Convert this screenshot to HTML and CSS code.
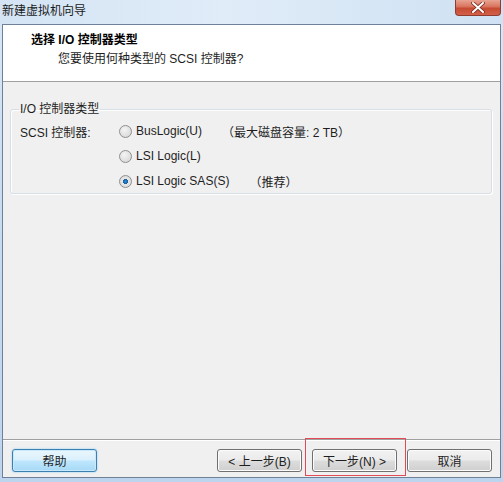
FILE: index.html
```html
<!DOCTYPE html>
<html lang="zh-CN">
<head>
    <meta charset="UTF-8">
    <title>新建虚拟机向导</title>
    <link rel="stylesheet" href="styles.css">
</head>
<body>
    <div class="window">
        <div class="titlebar">
            <span class="title">新建虚拟机向导</span>
            <button class="close" type="button">
                <svg width="14" height="11" viewBox="0 0 14 11">
                    <path d="M2 1 L12 10 M12 1 L2 10" stroke="#7a2a1e" stroke-width="3.6" stroke-linecap="round"/>
                    <path d="M2 1 L12 10 M12 1 L2 10" stroke="#fff" stroke-width="2" stroke-linecap="round"/>
                </svg>
            </button>
        </div>
        <div class="client">
            <div class="header">
                <div class="header-title">选择 I/O 控制器类型</div>
                <div class="header-sub">您要使用何种类型的 SCSI 控制器?</div>
            </div>
            <div class="content">
                <fieldset class="group">
                    <legend>I/O 控制器类型</legend>
                    <div class="row">
                        <span class="row-label">SCSI 控制器:</span>
                        <label class="option"><input type="radio" name="scsi"> BusLogic(U)</label>
                        <span class="note">（最大磁盘容量: 2 TB）</span>
                    </div>
                    <div class="row">
                        <span class="row-label"></span>
                        <label class="option"><input type="radio" name="scsi"> LSI Logic(L)</label>
                    </div>
                    <div class="row">
                        <span class="row-label"></span>
                        <label class="option"><input type="radio" name="scsi" checked> LSI Logic SAS(S)</label>
                        <span class="note">（推荐）</span>
                    </div>
                </fieldset>
            </div>
            <div class="footer">
                <button class="btn btn-help" type="button">帮助</button>
                <div class="nav">
                    <button class="btn" type="button">&lt; 上一步(B)</button>
                    <button class="btn" type="button">下一步(N) &gt;</button>
                    <button class="btn" type="button">取消</button>
                </div>
                <div class="mark"></div>
            </div>
        </div>
    </div>
</body>
</html>
```

FILE: styles.css
```css
body {
    margin: 0;
    font-family: "Liberation Sans", "Noto Sans CJK SC", sans-serif;
    font-size: 12px;
    color: #1e1e1e;
}
.window {
    width: 503px;
    height: 482px;
    background: linear-gradient(to bottom, #d9e8f7 0%, #c8ddf2 40%, #bcd4ee 100%);
    overflow: hidden;
}
.titlebar {
    height: 24px;
    display: flex;
    justify-content: space-between;
    align-items: flex-start;
    background: linear-gradient(to right, #d4e4f4 0%, #e0ecf8 45%, #cfe1f3 100%);
}
.title {
    padding: 3px 0 0 2px;
    line-height: 16px;
    color: #1a1a1a;
}
.close {
    width: 46px;
    height: 16px;
    margin-right: 2px;
    padding: 0;
    border: 1px solid #8f3b2d;
    border-top: none;
    border-radius: 0 0 4px 4px;
    background: linear-gradient(to bottom, #e8a493 0%, #d8735d 45%, #c74a32 55%, #d2604a 100%);
    display: flex;
    align-items: center;
    justify-content: center;
}
.client {
    margin: 0 2px 0 2px;
    height: 452px;
    border: 1px solid #6f8196;
    background: #f0f0f0;
    display: flex;
    flex-direction: column;
}
.header {
    height: 57px;
    background: #fff;
    border-bottom: 1px solid #a0a0a0;
    padding: 8px 0 0 28px;
    box-sizing: border-box;
}
.header-title {
    font-weight: bold;
    line-height: 14px;
    color: #000;
}
.header-sub {
    margin: 5px 0 0 27px;
    line-height: 14px;
}
.content {
    flex: 1;
    padding: 20px 8px 0 7px;
    border-bottom: 1px solid #a0a0a0;
}
.group {
    margin: 0;
    padding: 5px 0 2px 9px;
    border: 1px solid #d5dfe5;
    border-radius: 3px;
    box-shadow: inset 1px 1px 0 #fff, 1px 1px 0 #fff;
}
.group legend {
    padding: 0 1px;
    margin-left: -1px;
    line-height: 14px;
}
.row {
    display: flex;
    align-items: center;
    height: 20px;
    margin-bottom: 5px;
}
.row:last-child {
    margin-bottom: 0;
}
.row-label {
    width: 99px;
}
.option {
    display: flex;
    align-items: center;
    gap: 4px;
}
.option input {
    appearance: none;
    width: 13px;
    height: 13px;
    margin: 0;
    border: 1px solid #8e8f8f;
    border-radius: 50%;
    background: radial-gradient(circle at 40% 35%, #f4f4f4 0%, #dcdcdc 70%, #cfcfcf 100%);
    box-sizing: border-box;
}
.option input:checked {
    background: radial-gradient(circle, #2f8ed8 0%, #1c5f9e 30%, #e6e6e6 36%, #d6d6d6 100%);
}
.note {
    margin-left: 20px;
}
.footer {
    height: 37px;
    border-top: 1px solid #fff;
    box-sizing: border-box;
    padding: 8px 8px 0 9px;
    display: flex;
    justify-content: space-between;
    align-items: flex-start;
    position: relative;
}
.nav {
    display: flex;
    gap: 10px;
}
.btn {
    width: 85px;
    height: 23px;
    padding: 0;
    font-family: inherit;
    font-size: 12px;
    color: #1e1e1e;
    border: 1px solid #707070;
    border-radius: 3px;
    background: linear-gradient(to bottom, #f2f2f2 0%, #ebebeb 48%, #dddddd 52%, #cfcfcf 100%);
    box-shadow: inset 0 0 0 1px #fcfcfc;
}
.btn-help {
    border-color: #3c7fb1;
    background: linear-gradient(to bottom, #eaf6fd 0%, #d9f0fc 48%, #bee6fd 52%, #a7d9f5 100%);
    box-shadow: inset 0 0 0 1px #c8e9fa, 0 0 2px #7fc6f0;
}
.mark {
    position: absolute;
    left: 302px;
    top: -3px;
    width: 99px;
    height: 36px;
    border: 1px solid #e04b55;
}
```
